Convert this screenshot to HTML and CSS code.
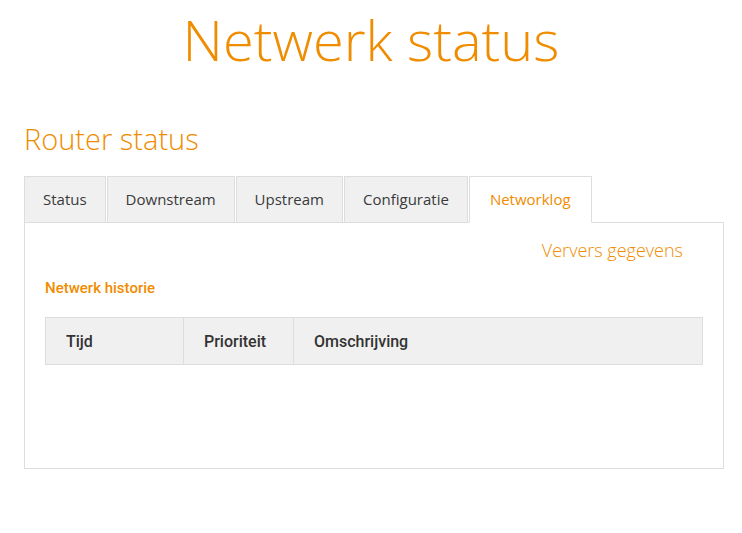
FILE: index.html
```html
<!DOCTYPE html>
<html lang="nl">
<head>
<meta charset="utf-8">
<title>Netwerk status</title>
<link rel="stylesheet" href="styles.css">
</head>
<body>
<h1 class="page-title">Netwerk status</h1>
<section class="router">
  <h2 class="section-title">Router status</h2>
  <ul class="tabs">
    <li class="tab">Status</li>
    <li class="tab">Downstream</li>
    <li class="tab">Upstream</li>
    <li class="tab">Configuratie</li>
    <li class="tab tab-active">Networklog</li>
  </ul>
  <div class="panel">
    <div class="refresh-row"><a class="refresh">Ververs gegevens</a></div>
    <h3 class="sub-title">Netwerk historie</h3>
    <table class="log-table">
      <thead>
        <tr>
          <th class="col-time">Tijd</th>
          <th class="col-prio">Prioriteit</th>
          <th class="col-desc">Omschrijving</th>
        </tr>
      </thead>
    </table>
  </div>
</section>
</body>
</html>
```

FILE: styles.css
```css
html, body {
  margin: 0;
  padding: 0;
  background: #ffffff;
}
body {
  font-family: "Open Sans", "Noto Sans", "Liberation Sans", sans-serif;
  color: #333333;
}
.page-title {
  margin: 0;
  padding-top: 7px;
  text-align: center;
  font-size: 56px;
  line-height: 64px;
  font-weight: 300;
  color: #f08c00;
}
.router {
  padding: 0 18px 0 24px;
}
.section-title {
  margin: 50px 0 0;
  font-size: 29px;
  line-height: 36px;
  font-weight: 300;
  color: #f08c00;
}
.tabs {
  list-style: none;
  margin: 19px 0 0;
  padding: 0;
  display: flex;
  position: relative;
  z-index: 1;
}
.tab {
  height: 45px;
  line-height: 45px;
  padding: 0 18px;
  font-size: 15px;
  color: #3a3a3a;
  background: #f0f0f0;
  border: 1px solid #dddddd;
  margin-right: 1px;
  margin-bottom: -1px;
}
.tab-active {
  padding: 0 20px;
  background: #ffffff;
  color: #f08c00;
  border-bottom-color: #ffffff;
}
.panel {
  border: 1px solid #dddddd;
  height: 245px;
  padding: 0 20px;
}
.refresh-row {
  display: flex;
  justify-content: flex-end;
  padding: 14px 20px 0 0;
}
.refresh {
  font-size: 18px;
  line-height: 26px;
  font-weight: 300;
  color: #f08c00;
}
.sub-title {
  margin: 15px 0 0;
  font-family: Roboto, "Open Sans", sans-serif;
  font-size: 15px;
  line-height: 20px;
  font-weight: 500;
  color: #f08c00;
}
.log-table {
  margin-top: 19px;
  width: 100%;
  border-collapse: collapse;
}
.log-table th {
  background: #f0f0f0;
  border: 1px solid #dddddd;
  height: 46px;
  padding: 0 20px;
  text-align: left;
  font-family: Roboto, "Open Sans", sans-serif;
  font-size: 16px;
  font-weight: 500;
  color: #333333;
}
.col-time { width: 97px; }
.col-prio { width: 69px; }
```
